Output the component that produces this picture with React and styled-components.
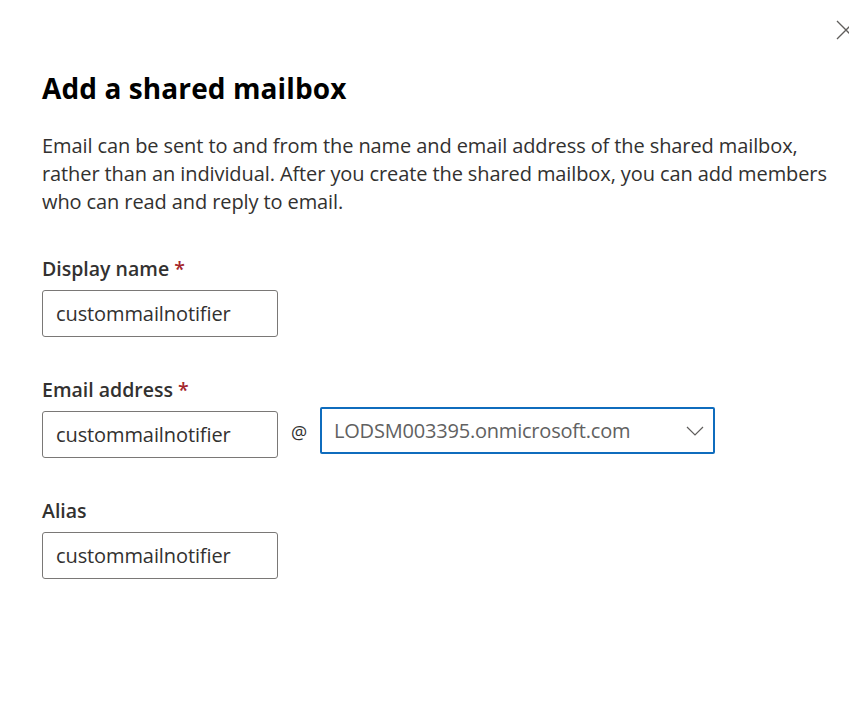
import styled, { createGlobalStyle } from 'styled-components'

const GlobalStyle = createGlobalStyle`
  body {
    margin: 0;
    background: #ffffff;
    font-family: "Open Sans", "Noto Sans", sans-serif;
    color: #323130;
  }
`

// パネル全体
const Panel = styled.div`
  width: 849px;
  height: 702px;
  overflow: hidden;
  box-sizing: border-box;
  padding: 0 0 0 42px;
`

const TopBar = styled.div`
  display: flex;
  justify-content: flex-end;
  height: 62px;
  padding-top: 20px;
  box-sizing: border-box;
  margin-right: -7px;
`

const CloseButton = styled.button`
  border: none;
  background: none;
  padding: 0;
  width: 20px;
  height: 20px;
  display: flex;
  align-items: center;
  justify-content: center;
  cursor: pointer;
`

const Title = styled.h2`
  margin: 0;
  font-size: 28px;
  font-weight: 700;
  color: #000000;
  line-height: 52px;
  letter-spacing: 0.1px;
`

const Description = styled.p`
  margin: 18px 0 0;
  width: 800px;
  font-size: 20px;
  line-height: 28px;
  color: #323130;
  letter-spacing: -0.1px;
`

const Field = styled.div`
  margin-top: ${p => p.$gap}px;
  display: flex;
  flex-direction: column;
  gap: 7px;
`

const Label = styled.label`
  font-size: 19.5px;
  font-weight: 600;
  line-height: 28px;
  color: #323130;
`

const Required = styled.span`
  color: #a4262c;
  margin-left: 5px;
`

const Row = styled.div`
  display: flex;
  align-items: flex-start;
`

const TextBox = styled.div`
  width: 236px;
  height: 47px;
  box-sizing: border-box;
  border: 1px solid #7a7876;
  border-radius: 3px;
  display: flex;
  align-items: center;
  padding: 0 13px;
  font-size: 20px;
  color: #323130;
  letter-spacing: -0.1px;
`

const At = styled.span`
  width: 42px;
  height: 47px;
  line-height: 42px;
  text-align: center;
  font-size: 18px;
  color: #323130;
`

const Dropdown = styled.div`
  width: 395px;
  height: 47px;
  box-sizing: border-box;
  margin-top: -4px;
  border: 2px solid #0f6cbd;
  border-radius: 2px;
  display: flex;
  align-items: center;
  justify-content: space-between;
  padding: 0 9px 0 12px;
  font-size: 20px;
  color: #616161;
  letter-spacing: -0.2px;
`

const Chevron = () => (
  <svg width="18" height="10" viewBox="0 0 18 10">
    <path d="M1 1 L9 9 L17 1" fill="none" stroke="#605e5c" strokeWidth="1.2" />
  </svg>
)

export default function App() {
  return (
    <>
      <GlobalStyle />
      <Panel>
        <TopBar>
          <CloseButton aria-label="Close">
            <svg width="20" height="20" viewBox="0 0 20 20">
              <path d="M1 1 L19 19 M19 1 L1 19" stroke="#605e5c" strokeWidth="1.3" fill="none" />
            </svg>
          </CloseButton>
        </TopBar>
        <Title>Add a shared mailbox</Title>
        <Description>
          Email can be sent to and from the name and email address of the shared mailbox,
          rather than an individual. After you create the shared mailbox, you can add members
          who can read and reply to email.
        </Description>

        <Field $gap={39}>
          <Label>Display name<Required>*</Required></Label>
          <TextBox>custommailnotifier</TextBox>
        </Field>

        <Field $gap={39}>
          <Label>Email address<Required>*</Required></Label>
          <Row>
            <TextBox>custommailnotifier</TextBox>
            <At>@</At>
            <Dropdown>
              <span>LODSM003395.onmicrosoft.com</span>
              <Chevron />
            </Dropdown>
          </Row>
        </Field>

        <Field $gap={39}>
          <Label>Alias</Label>
          <TextBox>custommailnotifier</TextBox>
        </Field>
      </Panel>
    </>
  )
}
